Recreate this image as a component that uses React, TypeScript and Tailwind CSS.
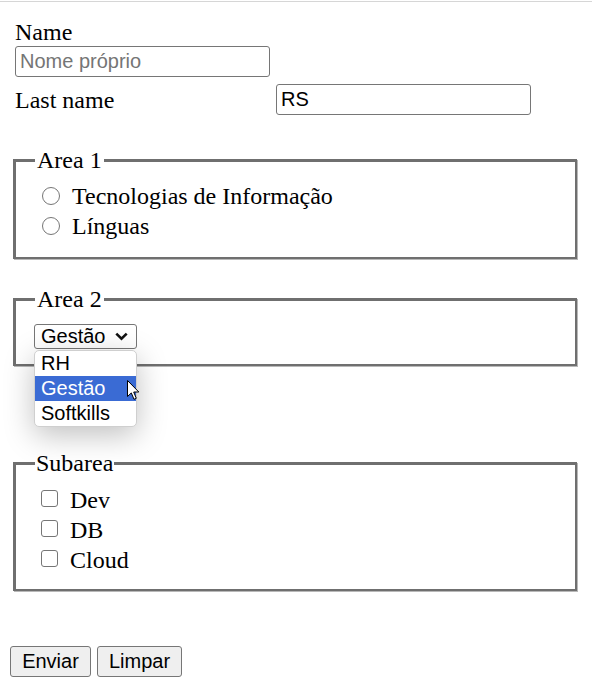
import React from "react";

const serif = { fontFamily: '"Liberation Serif", "Times New Roman", serif' };
const sans = { fontFamily: '"Liberation Sans", Arial, sans-serif' };

function Radio({ label }: { label: string }) {
  return (
    <div className="flex items-center h-[30px] ml-[7px]">
      <span className="w-[18px] h-[18px] rounded-full border border-[#767676] bg-white shrink-0" />
      <span className="ml-[12px] leading-[28px] whitespace-nowrap">{label}</span>
    </div>
  );
}

function Check({ label }: { label: string }) {
  return (
    <div className="flex items-center h-[30px] ml-[6px]">
      <span className="w-[17px] h-[17px] -mt-[4px] rounded-[3px] border border-[#767676] bg-white shrink-0" />
      <span className="ml-[12px] leading-[28px] whitespace-nowrap">{label}</span>
    </div>
  );
}

const fsClass =
  "ml-[3px] w-[564px] border-t-[3px] border-l-[3px] border-r-2 border-b-2 border-[#6f6f6f] shadow-[1px_1px_0_#b8b8b8] pl-[19px]";

export default function App() {
  return (
    <div
      className="relative w-[592px] h-[694px] bg-white overflow-hidden text-black text-[24px] leading-[28px]"
      style={serif}
    >
      <div className="h-px mt-px bg-[#d6d6d6]" />
      <div className="pl-[10px]">
        <div className="ml-[5px] mt-[16px] h-[28px]">Name</div>
        <input
          type="text"
          placeholder="Nome próprio"
          className="block ml-[5px] w-[255px] h-[31px] border border-[#767676] rounded-[3px] pl-[4px] text-[20px] leading-[23px] outline-none placeholder:text-[#757575]"
          style={sans}
        />
        <div className="ml-[5px] mt-[7px] flex items-center h-[31px]">
          <span className="w-[261px] leading-[28px]">Last name</span>
          <input
            type="text"
            defaultValue="RS"
            className="block w-[255px] h-[31px] border border-[#767676] rounded-[3px] pl-[4px] text-[20px] leading-[23px] outline-none"
            style={sans}
          />
        </div>

        <fieldset className={fsClass + " mt-[31px] pt-[7px] pb-[16px]"}>
          <legend className="px-[2px] leading-[28px]">Area 1</legend>
          <Radio label="Tecnologias de Informação" />
          <Radio label="Línguas" />
        </fieldset>

        <fieldset className={fsClass + " mt-[26px] pt-[11px] pb-[15px]"}>
          <legend className="px-[2px] leading-[28px]">Area 2</legend>
          <div
            className="-ml-[1px] w-[103px] h-[25px] border border-[#767676] rounded-[3px] flex items-center justify-between pl-[6px] pr-[8px] text-[20px] leading-[23px] bg-white"
            style={sans}
          >
            <span>Gestão</span>
            <svg width="13" height="9" viewBox="0 0 13 9" className="shrink-0">
              <polyline points="1.3,1.6 6.5,6.6 11.7,1.6" fill="none" stroke="#111" strokeWidth="2.6" />
            </svg>
          </div>
        </fieldset>

        <fieldset className={fsClass + " mt-[83px] pt-[8px] pb-[14px]"}>
          <legend className="px-[1px] leading-[28px]">Subarea</legend>
          <Check label="Dev" />
          <Check label="DB" />
          <Check label="Cloud" />
        </fieldset>

        <div className="mt-[55px] flex gap-[6px]" style={sans}>
          <button className="w-[81px] h-[31px] bg-[#efefef] border border-[#767676] rounded-[3px] text-[20px] leading-[23px]">
            Enviar
          </button>
          <button className="w-[85px] h-[31px] bg-[#efefef] border border-[#767676] rounded-[3px] text-[20px] leading-[23px]">
            Limpar
          </button>
        </div>
      </div>

      {/* open dropdown list */}
      <div
        className="absolute left-[34px] top-[350px] w-[103px] bg-white rounded-[5px] border border-[#cfcfcf] shadow-[0_8px_30px_rgba(0,0,0,0.25)] overflow-hidden text-[20px] leading-[23px]"
        style={sans}
      >
        <div className="h-[25px] flex items-center pl-[6px]">RH</div>
        <div className="h-[25px] flex items-center pl-[6px] bg-[#3a6bd4] text-white">Gestão</div>
        <div className="h-[25px] flex items-center pl-[6px]">Softkills</div>
      </div>

      {/* mouse cursor */}
      <svg
        className="absolute left-[127px] top-[380px]"
        width="13"
        height="21"
        viewBox="0 0 13 21"
      >
        <path
          d="M0.5,0.5 L0.5,16.5 L4.3,12.9 L7,19.3 L9.3,18.3 L6.7,12 L11.8,12 Z"
          fill="#fff"
          stroke="#000"
          strokeWidth="1"
          strokeLinejoin="miter"
        />
      </svg>
    </div>
  );
}
